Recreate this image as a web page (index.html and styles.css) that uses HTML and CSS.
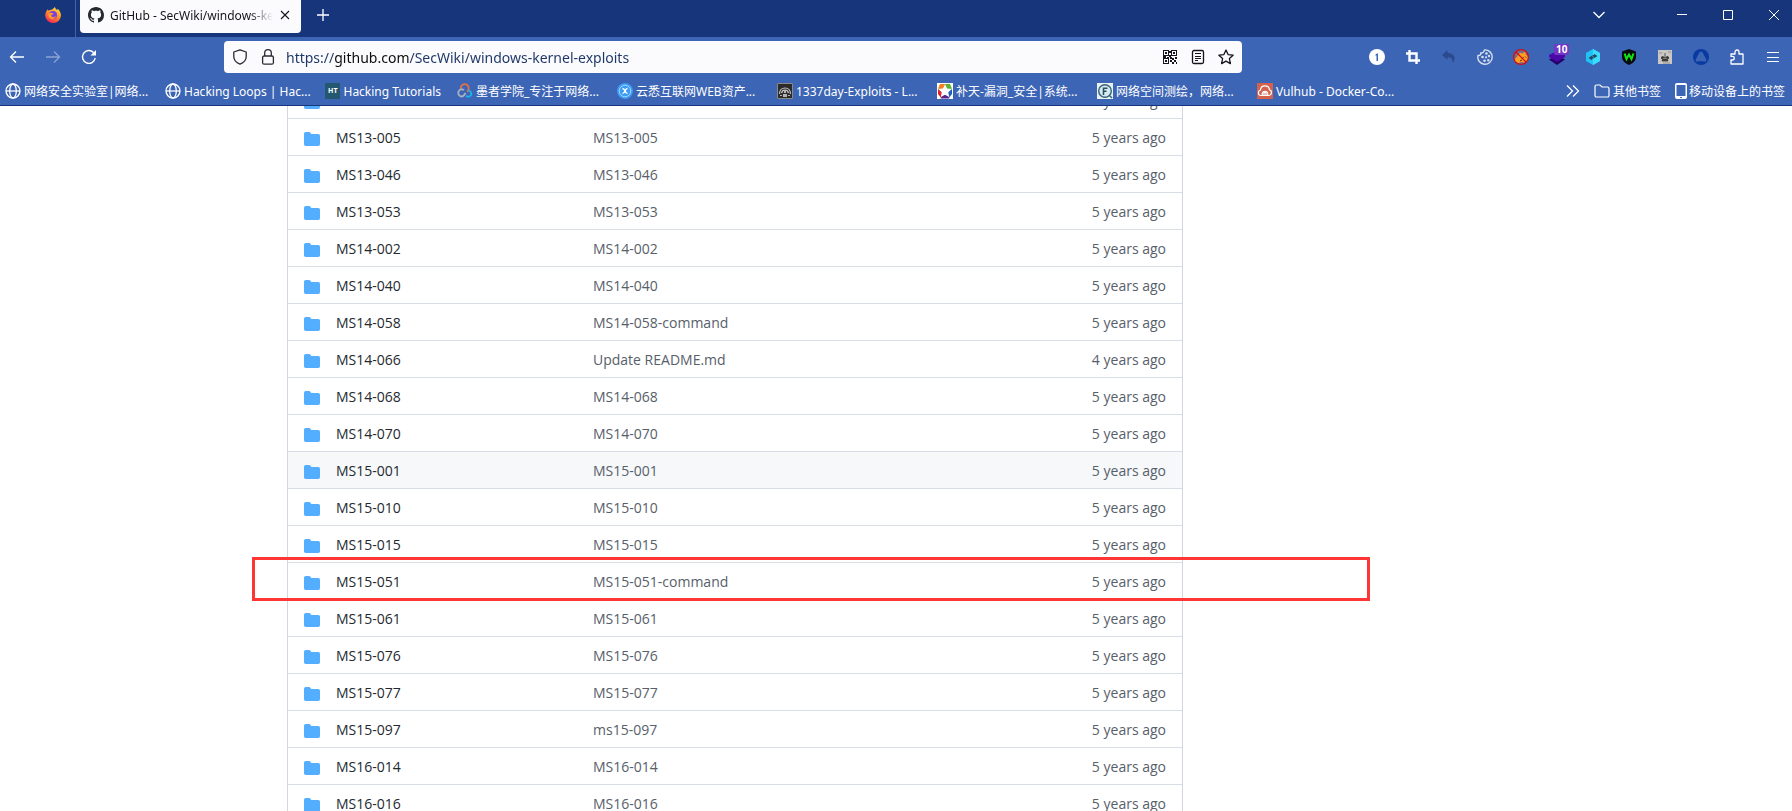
FILE: index.html
```html
<!DOCTYPE html>
<html lang="zh-CN">
<head>
<meta charset="utf-8">
<title>GitHub - SecWiki/windows-kernel-exploits</title>
<link rel="stylesheet" href="styles.css">
</head>
<body>
<svg class="sprite" aria-hidden="true">
  <symbol id="folder" viewBox="0 0 16 16"><path fill="currentColor" d="M1.750 1A1.750 1.750 0 000 2.750v10.500C0 14.200.8 15 1.750 15h12.500A1.750 1.750 0 0016 13.250v-8.500A1.750 1.750 0 0014.250 3H7.500a.25.25 0 01-.2-.1l-.9-1.200C6.070 1.260 5.550 1 5 1H1.750z"/></symbol>
  <symbol id="globe" viewBox="0 0 16 16"><g fill="none" stroke="currentColor" stroke-width="1.300"><circle cx="8" cy="8" r="7"/><ellipse cx="8" cy="8" rx="3.300" ry="7"/><path d="M1 8h14"/></g></symbol>
</svg>
<header class="chrome">
  <div class="tabstrip">
    <button class="fx-view" aria-label="Firefox View">
      <svg width="18" height="18" viewBox="0 0 18 18"><defs><linearGradient id="fx" x1="0.8" y1="0" x2="0.3" y2="1"><stop offset="0" stop-color="#ffe23a"/><stop offset=".5" stop-color="#ff8a2b"/><stop offset="1" stop-color="#f5265b"/></linearGradient></defs><path fill="url(#fx)" d="M3.500 3.200C3.700 4 4.200 4.600 5 4.600 6 3.800 6.500 3.700 7.500 3.800 9 3 9.500 2 11 1c.2 1.500 1.200 2.100 2 3 .7-.2.7-.8.6-1.300C15.600 4.300 17 6.700 17 9.500A7.800 7.800 0 019 17 7.800 7.800 0 011.200 9.500C1.200 7 2.500 5.500 3.500 3.200z"/><circle cx="9" cy="9" r="4" fill="#7a3fe0"/><path fill="#ff9a2b" d="M4.500 8c1.500-1.600 3-1.300 5-.6-.4 1.200-1.700 1.200-2.400 2 .3 1.900 2.900 2.400 5 .7-.8 2.500-3.200 3.500-5.300 2.600C4.700 11.900 3.900 10 4.500 8z"/></svg>
    </button>
    <div class="tab">
      <svg width="16" height="16" viewBox="0 0 16 16"><path fill="#24292f" d="M8 0C3.580 0 0 3.580 0 8c0 3.540 2.290 6.530 5.470 7.590.4.070.55-.17.55-.38 0-.19-.01-.82-.01-1.490-2.010.37-2.530-.49-2.690-.94-.09-.23-.48-.94-.82-1.130-.28-.15-.68-.52-.01-.53.63-.01 1.080.58 1.230.82.72 1.210 1.870.87 2.330.66.070-.52.28-.87.51-1.070-1.780-.2-3.640-.89-3.640-3.950 0-.87.31-1.590.82-2.150-.08-.2-.36-1.020.08-2.120 0 0 .67-.21 2.200.82.640-.18 1.320-.27 2-.27s1.360.09 2 .27c1.530-1.040 2.200-.82 2.200-.82.44 1.100.16 1.920.08 2.120.51.56.82 1.270.82 2.150 0 3.070-1.870 3.750-3.650 3.950.29.25.54.73.54 1.480 0 1.070-.01 1.930-.01 2.200 0 .21.15.46.55.38A8.010 8.010 0 0016 8c0-4.420-3.580-8-8-8z"/></svg>
      <span class="tab-title">GitHub - SecWiki/windows-kernel-exploits</span>
      <button class="tab-close" aria-label="Close tab"><svg width="10" height="10" viewBox="0 0 10 10"><path d="M1 1l8 8M9 1L1 9" stroke="#15141a" stroke-width="1.100"/></svg></button>
    </div>
    <button class="new-tab" aria-label="New tab"><svg width="12" height="12" viewBox="0 0 12 12"><path d="M6 0v12M0 6h12" stroke="#fff" stroke-width="1.300"/></svg></button>
    <div class="window-buttons">
      <button class="all-tabs" aria-label="List all tabs"><svg width="14" height="8" viewBox="0 0 14 8"><path d="M1.500 1L7 6.500 12.500 1" fill="none" stroke="#fff" stroke-width="1.300"/></svg></button>
      <button aria-label="Minimize"><svg width="10" height="10" viewBox="0 0 10 10"><path d="M0 4.500h10" stroke="#fff"/></svg></button>
      <button aria-label="Maximize"><svg width="10" height="10" viewBox="0 0 10 10"><path d="M.5.5h9v9h-9z" fill="none" stroke="#fff"/></svg></button>
      <button aria-label="Close"><svg width="10" height="10" viewBox="0 0 10 10"><path d="M0 0l10 10M10 0L0 10" stroke="#fff"/></svg></button>
    </div>
  </div>

  <div class="navbar">
    <div class="nav-group">
      <button aria-label="Back"><svg width="16" height="16" viewBox="0 0 16 16"><path d="M15 8H1.500M7 2.500L1.500 8 7 13.500" fill="none" stroke="#fff" stroke-width="1.300"/></svg></button>
      <button aria-label="Forward" disabled><svg width="16" height="16" viewBox="0 0 16 16"><path d="M1 8h13.500M9 2.500L14.500 8 9 13.500" fill="none" stroke="#8ba3d3" stroke-width="1.300"/></svg></button>
      <button aria-label="Reload"><svg width="16" height="16" viewBox="0 0 16 16"><path d="M14.200 9A6.400 6.400 0 1112.500 3.500L14 5" fill="none" stroke="#fff" stroke-width="1.400"/><path d="M15 1v5.500H9.500z" fill="#fff"/></svg></button>
    </div>
    <div class="urlbar">
      <svg width="16" height="16" viewBox="0 0 16 16"><path d="M8 .8L14.200 3v4.500c0 3.600-2.700 6.300-6.200 7.700C4.500 13.800 1.800 11.100 1.800 7.500V3z" fill="none" stroke="#2b2a33" stroke-width="1.300" stroke-linejoin="round"/></svg>
      <svg width="16" height="16" viewBox="0 0 16 16"><g fill="none" stroke="#2b2a33" stroke-width="1.300"><rect x="2.600" y="7" width="10.800" height="8.200" rx="1.500"/><path d="M4.700 7V4a3.300 3.300 0 016.600 0v3"/></g></svg>
      <input class="url" type="text" aria-label="Address" value="https://github.com/SecWiki/windows-kernel-exploits">
      <div class="url-actions">
        <button aria-label="QR code"><svg width="14" height="14" viewBox="0 0 14 14" shape-rendering="crispEdges"><g fill="none" stroke="#15141a"><path d="M.5.5h5v5h-5zM8.500.5h5v5h-5zM.5 8.500h5v5h-5z"/></g><path fill="#15141a" d="M2 2h2v2H2zM10 2h2v2h-2zM2 10h2v2H2zM6 1h2v2H6zM6 5h2v2H6zM0 6h3v2H0zM7 7h2v2H7zM9 8h2v2H9zM12 7h2v2h-2zM7 10h2v2H7zM11 10h2v2h-2zM9 12h2v2H9zM13 12h1v2h-1zM4 7h2v1H4z"/></svg></button>
        <button aria-label="Reader view"><svg width="16" height="16" viewBox="0 0 16 16"><rect x="2.500" y="1.500" width="11" height="13" rx="1.500" fill="none" stroke="#15141a" stroke-width="1.300"/><path d="M5 4.500h6M5 7.500h6M5 9.500h6M5 11.500h3" stroke="#15141a"/></svg></button>
        <button aria-label="Bookmark"><svg width="16" height="16" viewBox="0 0 16 16"><path d="M8 1l2.100 4.600 5 .6-3.700 3.400 1 5L8 12.100l-4.400 2.500 1-5L.9 6.200l5-.6z" fill="none" stroke="#15141a" stroke-width="1.300" stroke-linejoin="round"/></svg></button>
      </div>
    </div>
    <div class="nav-group">
      <button aria-label="1Password"><svg width="16" height="16" viewBox="0 0 16 16"><circle cx="8" cy="8" r="8" fill="#fff"/><path d="M6.500 5.500L8 4.400h1V12H7.500V6.200l-1 .5z" fill="#3d65b5"/></svg></button>
      <button aria-label="Screenshot"><svg width="14" height="14" viewBox="0 0 14 14"><path d="M3.500 0v10.500H14M0 3.500h10.500V14" fill="none" stroke="#fff" stroke-width="2.400"/></svg></button>
      <button aria-label="Undo" disabled><svg width="16" height="16" viewBox="0 0 16 16"><path d="M6.500 1L1 6l5.500 5V8.200c3.500 0 5.300 1.400 5 5.800 4.500-4.600 1.800-9.500-5-9.900z" fill="#2c4a8d"/></svg></button>
      <button aria-label="Cookie editor"><svg width="16" height="16" viewBox="0 0 16 16"><path d="M9 .9A7.200 7.200 0 101 9c.3 3.500 3.300 6.200 7 6.200A7.200 7.200 0 0014.800 6" fill="none"/><path d="M7.500.9A7.200 7.200 0 111 6.500c2 .3 3-.7 2.700-2.500 2 .2 3.600-1.100 3.800-3.100z" fill="none" stroke="#d5def0" stroke-width="1.400" stroke-linejoin="round"/><g fill="#d5def0"><circle cx="9.500" cy="4.500" r="1.300"/><circle cx="5.500" cy="8" r="1.300"/><circle cx="9" cy="8.300" r="1.100"/><circle cx="12" cy="7" r="1.200"/><circle cx="7.500" cy="11.800" r="1.300"/><circle cx="11.300" cy="11.200" r="1.200"/></g></svg></button>
      <button aria-label="FoxyProxy"><svg width="16" height="16" viewBox="0 0 16 16"><circle cx="8" cy="8" r="7.300" fill="#7d6a88"/><path d="M2 12c-.3-2.200.8-3.500 2-4L5 5.500C7 3.500 8.500 3.700 9.500 4.500L12 2.500l.8 3c1.500.5 2.300 2 2.200 4.500L12 13.500l-4-.4-3 1.200z" fill="#ff9c22"/><path d="M9.500 8l1 1M12 7.500l1 1M7 12l2-1" stroke="#5c2b12"/><circle cx="8" cy="8" r="7.400" fill="none" stroke="#d30d13" stroke-width="1.200"/><path d="M3 3l10 10" stroke="#d30d13" stroke-width="1.200"/></svg></button>
      <button class="layers" aria-label="Wappalyzer"><svg width="16" height="16" viewBox="0 0 16 16"><path d="M0 10.500l8-4 8 4L8 16z" fill="#240068"/><path d="M0 6l8-4 8 4v2l-8 5-8-5z" fill="#4a08a9"/></svg><span class="count">10</span></button>
      <button aria-label="HackTools"><svg width="16" height="16" viewBox="0 0 16 16"><path d="M8 0l7 4v8l-7 4-7-4V4z" fill="#20c3f7"/><path d="M8 0l7 4v8l-7 4z" fill="#3ddcff"/><path d="M3.500 9L7 6.500v1.300h1.500v2H7v1.500zM12.500 7L9 4.700V6H7.500v2H9v1.300z" fill="#274a60"/></svg></button>
      <button aria-label="WebRTC shield"><svg width="16" height="16" viewBox="0 0 16 16"><path d="M8 0l7 2.500V8c0 3.500-3 6.500-7 8-4-1.500-7-4.500-7-8V2.500z" fill="#080b10"/><path d="M3.600 4.500L5.500 10 8 5.500l2.500 4.500 1.900-5.500" fill="none" stroke="#10e710" stroke-width="2"/></svg></button>
      <button aria-label="Hackbar"><svg width="14" height="14" viewBox="0 0 14 14"><path d="M0 0h14v14H0z" fill="#c9c6c3"/><path d="M1 3h3M10 2h3M5 13h7" stroke="#989490"/><path d="M7 3v4M3.500 9V7l1.500-.7L6.500 8h1L9 6.300l1.500.7v2M5 8l-1 3h6L9 8z" fill="#3b3837" stroke="#3b3837" stroke-width=".8"/></svg></button>
      <button aria-label="NordVPN"><svg width="16" height="16" viewBox="0 0 16 16"><circle cx="8" cy="8" r="8" fill="#083aa0"/><path d="M8 2.500c1 0 1.500.8 2 1.800l3 5.700c1 2 .2 3-1.500 2.600-2.300-.6-4.700-.6-7 0C2.800 13 2 12 3 10l3-5.700c.5-1 1-1.800 2-1.800z" fill="#3d65b5"/></svg></button>
      <button aria-label="Extensions"><svg width="16" height="16" viewBox="0 0 16 16"><path d="M2 5h4V3a2 2 0 014 0v2h4v10H2v-4h1.500a1.800 1.800 0 000-3.600H2z" fill="none" stroke="#fff" stroke-width="1.300" stroke-linejoin="round"/></svg></button>
      <button aria-label="Menu"><svg width="12" height="12" viewBox="0 0 12 12"><path d="M0 1.500h12M0 6.500h12M0 10.500h12" stroke="#fff"/></svg></button>
    </div>
  </div>

  <nav class="bookmarks" aria-label="Bookmarks">
    <a class="bookmark" href="#"><svg width="16" height="16"><use href="#globe"/></svg>网络安全实验室|网络...</a>
    <a class="bookmark" href="#"><svg width="16" height="16"><use href="#globe"/></svg>Hacking Loops | Hac...</a>
    <a class="bookmark short" href="#"><span class="ht" aria-hidden="true">HT</span>Hacking Tutorials</a>
    <a class="bookmark" href="#"><svg width="16" height="16" viewBox="0 0 16 16"><g fill="none" stroke-width="1.800"><path d="M4 6.500A4 4 0 1111.500 6.500L10.500 9" stroke="#e9713f"/><path d="M7 7A3.600 3.600 0 104.500 13.500c2 0 3-1.500 4-3.500" stroke="#a5b0c4"/><path d="M9 13.200c4 1.500 6-1 5-3.700-.5-1.200-1.500-2-2.500-2" stroke="#19b4e8"/></g></svg>墨者学院_专注于网络...</a>
    <a class="bookmark" href="#"><svg width="16" height="16" viewBox="0 0 16 16"><circle cx="8" cy="8" r="8" fill="#3b9bf5"/><circle cx="8" cy="8" r="5.800" fill="none" stroke="#a9d5ff"/><path d="M5.500 5.500c3 0 2 5 5 5M10.500 5.500c-3 0-2 5-5 5" fill="none" stroke="#fff" stroke-width="1.400"/></svg>云悉互联网WEB资产...</a>
    <a class="bookmark" href="#"><svg width="16" height="16" viewBox="0 0 16 16"><path d="M0 0h16v16H0z" fill="#2b2b2b"/><path d="M.5.5h15v15H.5z" fill="none" stroke="#898989"/><path d="M2.500 11c0-8 11-8 11 0M4.500 10c1-4 6-4 7 0" fill="none" stroke="#c9c9c9" stroke-width="1.200"/><path d="M7 7h2v3H7zM3 12h2v1H3zM6 11h4v3H6zM11 12h2v1h-2z" fill="#b5b5b5"/></svg>1337day-Exploits - L...</a>
    <a class="bookmark" href="#"><svg width="16" height="16" viewBox="0 0 16 16"><path d="M0 0h16v16H0z" fill="#fff"/><path d="M8 8L1 5.500 3 1h5z" fill="#f58020"/><path d="M8 8V1h5l2 4.500z" fill="#5db431"/><path d="M8 8L1 6v5l3 4z" fill="#e0202c"/><path d="M8 8l7-2v5l-3 4z" fill="#235fb8"/><path d="M8 8l4.500 7.500h-9z" fill="#542588"/><path d="M8 1.200l2 4.200 4.800.6-3.500 3.200.9 4.900L8 11.700l-4.200 2.400.9-4.900L1.200 6 6 5.400z" fill="#fff"/></svg>补天-漏洞_安全|系统...</a>
    <a class="bookmark" href="#"><svg width="16" height="16" viewBox="0 0 16 16"><path d="M0 0h16v16H0z" fill="#e9f1f5"/><circle cx="8" cy="8" r="6.300" fill="#d5e9f0" stroke="#376577" stroke-width="1.400"/><path d="M6.500 12V5.200h4M6.500 8.300h3" fill="none" stroke="#274f60" stroke-width="1.500"/><path d="M12 12l3 3" stroke="#376577" stroke-width="1.400"/></svg>网络空间测绘，网络...</a>
    <a class="bookmark" href="#"><svg width="16" height="16" viewBox="0 0 16 16"><path d="M0 0h16v16H0z" fill="#d2624d"/><path d="M4 12.500A2.800 2.800 0 013.500 7c.3-5.300 8.200-5.500 9-.2 2.800.8 2.500 5-.5 5.700z" fill="none" stroke="#fff" stroke-width="1.200"/><path d="M5.300 12c-1.200-5 6.700-5 5.400 0M7 12V9.500h2V12" fill="none" stroke="#fff" stroke-width="1.200"/></svg>Vulhub - Docker-Co...</a>
    <div class="bookmarks-end">
      <button class="more" aria-label="More bookmarks"><svg width="14" height="14" viewBox="0 0 14 14"><path d="M1 1.500L6.500 7 1 12.500M7 1.500L12.500 7 7 12.500" fill="none" stroke="#fff" stroke-width="1.300"/></svg></button>
      <button class="folder-button"><svg width="16" height="16" viewBox="0 0 16 16"><path d="M1 3.500A1.500 1.500 0 012.500 2H6l2 2h5.500A1.500 1.500 0 0115 5.500v7a1.500 1.500 0 01-1.500 1.500h-11A1.500 1.500 0 011 12.500z" fill="none" stroke="#fff" stroke-width="1.200"/></svg>其他书签</button>
      <button class="mobile-button"><svg width="12" height="16" viewBox="0 0 12 16"><path fill-rule="evenodd" d="M2 0h8a2 2 0 012 2v12a2 2 0 01-2 2H2a2 2 0 01-2-2V2A2 2 0 012 0zM1.500 2v11h9V2zM5 14v1h2v-1z" fill="#fff"/></svg>移动设备上的书签</button>
    </div>
  </nav>
</header>

<main class="viewport">
  <div class="layout">
    <table class="files" aria-label="Files">
      <tbody>
        <tr><td class="name"><svg class="dir"><use href="#folder"/></svg></td><td class="message"></td><td class="age">5 years ago</td></tr>
        <tr><td class="name"><svg class="dir"><use href="#folder"/></svg><a href="#">MS13-005</a></td><td class="message"><a href="#">MS13-005</a></td><td class="age">5 years ago</td></tr>
        <tr><td class="name"><svg class="dir"><use href="#folder"/></svg><a href="#">MS13-046</a></td><td class="message"><a href="#">MS13-046</a></td><td class="age">5 years ago</td></tr>
        <tr><td class="name"><svg class="dir"><use href="#folder"/></svg><a href="#">MS13-053</a></td><td class="message"><a href="#">MS13-053</a></td><td class="age">5 years ago</td></tr>
        <tr><td class="name"><svg class="dir"><use href="#folder"/></svg><a href="#">MS14-002</a></td><td class="message"><a href="#">MS14-002</a></td><td class="age">5 years ago</td></tr>
        <tr><td class="name"><svg class="dir"><use href="#folder"/></svg><a href="#">MS14-040</a></td><td class="message"><a href="#">MS14-040</a></td><td class="age">5 years ago</td></tr>
        <tr><td class="name"><svg class="dir"><use href="#folder"/></svg><a href="#">MS14-058</a></td><td class="message"><a href="#">MS14-058-command</a></td><td class="age">5 years ago</td></tr>
        <tr><td class="name"><svg class="dir"><use href="#folder"/></svg><a href="#">MS14-066</a></td><td class="message"><a href="#">Update README.md</a></td><td class="age">4 years ago</td></tr>
        <tr><td class="name"><svg class="dir"><use href="#folder"/></svg><a href="#">MS14-068</a></td><td class="message"><a href="#">MS14-068</a></td><td class="age">5 years ago</td></tr>
        <tr><td class="name"><svg class="dir"><use href="#folder"/></svg><a href="#">MS14-070</a></td><td class="message"><a href="#">MS14-070</a></td><td class="age">5 years ago</td></tr>
        <tr class="hovered"><td class="name"><svg class="dir"><use href="#folder"/></svg><a href="#">MS15-001</a></td><td class="message"><a href="#">MS15-001</a></td><td class="age">5 years ago</td></tr>
        <tr><td class="name"><svg class="dir"><use href="#folder"/></svg><a href="#">MS15-010</a></td><td class="message"><a href="#">MS15-010</a></td><td class="age">5 years ago</td></tr>
        <tr><td class="name"><svg class="dir"><use href="#folder"/></svg><a href="#">MS15-015</a></td><td class="message"><a href="#">MS15-015</a></td><td class="age">5 years ago</td></tr>
        <tr class="marked"><td class="name"><svg class="dir"><use href="#folder"/></svg><a href="#">MS15-051</a></td><td class="message"><a href="#">MS15-051-command</a></td><td class="age">5 years ago<span class="marker"></span></td></tr>
        <tr><td class="name"><svg class="dir"><use href="#folder"/></svg><a href="#">MS15-061</a></td><td class="message"><a href="#">MS15-061</a></td><td class="age">5 years ago</td></tr>
        <tr><td class="name"><svg class="dir"><use href="#folder"/></svg><a href="#">MS15-076</a></td><td class="message"><a href="#">MS15-076</a></td><td class="age">5 years ago</td></tr>
        <tr><td class="name"><svg class="dir"><use href="#folder"/></svg><a href="#">MS15-077</a></td><td class="message"><a href="#">MS15-077</a></td><td class="age">5 years ago</td></tr>
        <tr><td class="name"><svg class="dir"><use href="#folder"/></svg><a href="#">MS15-097</a></td><td class="message"><a href="#">ms15-097</a></td><td class="age">5 years ago</td></tr>
        <tr><td class="name"><svg class="dir"><use href="#folder"/></svg><a href="#">MS16-014</a></td><td class="message"><a href="#">MS16-014</a></td><td class="age">5 years ago</td></tr>
        <tr><td class="name"><svg class="dir"><use href="#folder"/></svg><a href="#">MS16-016</a></td><td class="message"><a href="#">MS16-016</a></td><td class="age">5 years ago</td></tr>
      </tbody>
    </table>
  </div>
</main>
</body>
</html>
```
FILE: styles.css
```css
* { box-sizing: border-box; }

body {
  margin: 0;
  height: 100vh;
  display: flex;
  flex-direction: column;
  overflow: hidden;
  background: #fff;
  font-family: "Open Sans", "Noto Sans CJK SC", sans-serif;
  font-size: 14px;
}

button {
  display: flex;
  align-items: center;
  justify-content: center;
  margin: 0;
  padding: 0;
  border: 0;
  background: none;
  color: inherit;
  font: inherit;
}

a { color: inherit; text-decoration: none; }
svg { flex: none; display: block; }
.sprite { position: absolute; width: 0; height: 0; }

/* Browser chrome */
.chrome {
  flex: none;
  background: #3d65b5;
  border-bottom: 1px solid #16357b;
  color: #fff;
  font-family: "Noto Sans", "Noto Sans CJK SC", sans-serif;
  font-size: 12px;
}

.tabstrip {
  display: flex;
  height: 37px;
  background: #16357b;
}

.tabstrip button { height: 30px; }

.tabstrip .fx-view {
  width: 76px;
  height: 37px;
  padding: 0 0 8px 30px;
  border-right: 1px solid #4764a2;
}

.tab {
  display: flex;
  align-items: center;
  gap: 6px;
  width: 221px;
  height: 33px;
  margin-left: 4px;
  padding: 0 10px 3px 8px;
  border-radius: 0 0 4px 4px;
  background: #fbfbfe;
  color: #15141a;
}

.tab-title {
  flex: 1;
  overflow: hidden;
  white-space: nowrap;
  -webkit-mask-image: linear-gradient(to left, transparent, #000 24px);
  mask-image: linear-gradient(to left, transparent, #000 24px);
}

.tab-close { width: 12px; }
.new-tab { width: 44px; }
.window-buttons { display: flex; margin-left: auto; padding-right: 5px; }
.window-buttons button { width: 26px; margin-left: 20px; }
.window-buttons .all-tabs { width: 32px; margin-right: 34px; }

.navbar {
  display: flex;
  align-items: center;
  justify-content: space-between;
  height: 40px;
  padding: 0 3px 0 1px;
}

.nav-group { display: flex; gap: 4px; }
.nav-group button { width: 32px; height: 32px; }

.urlbar {
  flex: 1;
  display: flex;
  align-items: center;
  gap: 12px;
  height: 32px;
  margin: 0 119px;
  padding: 0 8px;
  border-radius: 4px;
  background: #fbfbfe;
}

.url {
  flex: 1;
  min-width: 0;
  height: 32px;
  margin-left: -2px;
  padding: 0;
  border: 0;
  outline: 0;
  background: linear-gradient(to right, #1d3666 48px, #0c0c0d 48px, #0c0c0d 124px, #1d3666 124px);
  -webkit-background-clip: text;
  background-clip: text;
  color: transparent;
  font-family: "Noto Sans", sans-serif;
  font-size: 14px;
}

.url-actions { display: flex; gap: 12px; }
.url-actions button { width: 16px; height: 16px; }

.layers { position: relative; }

.count {
  position: absolute;
  left: 13px;
  top: 3px;
  padding: 0 2px;
  border-radius: 2px;
  background: #7437c4;
  font-size: 10px;
  font-weight: 700;
  line-height: 11px;
}

.bookmarks {
  display: flex;
  align-items: center;
  gap: 16px;
  height: 28px;
  padding: 0 7px 0 5px;
  white-space: nowrap;
}

.bookmark {
  flex: none;
  display: flex;
  align-items: center;
  gap: 3px;
  width: 144px;
}

.bookmark.short { width: 116px; }

.ht {
  width: 16px;
  height: 16px;
  background: #235870;
  font-size: 7px;
  font-weight: 700;
  line-height: 16px;
  text-align: center;
}

.bookmarks-end {
  display: flex;
  align-items: center;
  gap: 14px;
  margin-left: auto;
}

.folder-button { gap: 3px; }
.mobile-button { gap: 2px; }

/* Repository file list */
.viewport { flex: 1; min-height: 0; overflow: hidden; }

.layout {
  display: grid;
  grid-template-columns: minmax(0, 1fr) 296px;
  gap: 24px;
  max-width: 1282px;
  margin: -25px auto 0;
  padding: 0 34px 0 32px;
}

.files {
  table-layout: fixed;
  width: 100%;
  border-collapse: separate;
  border-spacing: 0;
  border: solid #d0d7de;
  border-width: 0 1px;
  color: #57606a;
}

.files td {
  height: 37px;
  padding: 2px 0 0;
  border-top: 1px solid #d8dee4;
  line-height: 20px;
  vertical-align: middle;
}

.files .name {
  width: 305px;
  padding-left: 16px;
  color: #24292f;
}

.dir {
  display: inline-block;
  width: 16px;
  height: 16px;
  margin-right: 16px;
  color: #54aeff;
  vertical-align: -4px;
}

.files .age {
  width: 140px;
  padding-right: 16px;
  text-align: right;
}

.hovered { background: #f6f8fa; }

.marked { position: relative; z-index: 1; }

.marker {
  position: absolute;
  inset: -5px -188px -2px -36px;
  border: 3px solid #ff3636;
  pointer-events: none;
}
```
